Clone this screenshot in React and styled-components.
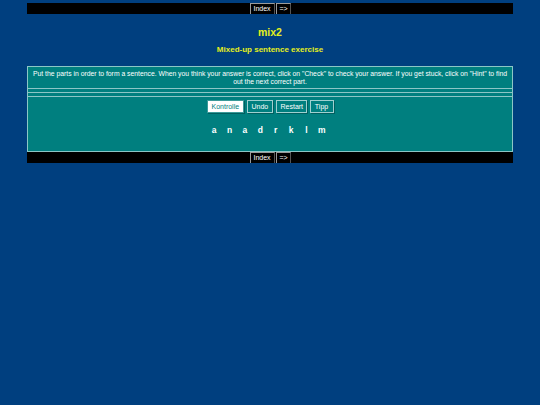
import React from "react";
import styled, { createGlobalStyle } from "styled-components";

const GlobalStyle = createGlobalStyle`
	html, body {
		margin: 0;
		padding: 0;
		background-color: #003f7f;
		font-family: "Liberation Sans", Arial, sans-serif;
	}
	body {
		min-height: 405px;
	}
`;

const Page = styled.div`
	width: 90%;
	margin: 0 auto;
	padding-top: 3px;
`;

const NavBar = styled.div`
	display: flex;
	justify-content: center;
	background-color: #000000;
	height: 11px;
	gap: 1px;
`;

const NavButton = styled.button`
	background-color: #000000;
	color: #ffffff;
	font-family: "Liberation Sans", Arial, sans-serif;
	font-size: 7px;
	border: none;
	border-top: 1px solid #9a9a9a;
	border-left: 1px solid #9a9a9a;
	border-right: 1px solid #555555;
	padding: 0 3px;
	width: ${props => props.width}px;
	height: 11px;
	line-height: 10px;
	text-align: ${props => (props.wide ? "center" : "left")};
	cursor: pointer;
`;

const Title = styled.h2`
	margin: 12px 0 0;
	text-align: center;
	color: #e4ef1c;
	font-size: 10.5px;
	font-weight: bold;
	line-height: 12px;
`;

const SubTitle = styled.h3`
	margin: 7px 0 0;
	text-align: center;
	color: #e4ef1c;
	font-size: 8px;
	font-weight: bold;
	line-height: 10px;
`;

const Box = styled.div`
	background-color: #007f7f;
	border: 1px solid #8cc6c6;
	border-top-width: ${props => (props.joined ? 0 : 1)}px;
	color: #ffffff;
`;

const Instructions = styled(Box)`
	margin-top: 11px;
	padding: 3px 3px 2px;
	font-size: 6.8px;
	line-height: 8px;
	text-align: center;
`;

const Feedback = styled(Box)`
	padding: 3px 0;
	border-bottom: none;
`;

const Rule = styled.div`
	height: 1px;
	background-color: #8cc6c6;
`;

const Exercise = styled(Box)`
	padding: 3px 0 0;
	height: 51px;
	display: flex;
	flex-direction: column;
	align-items: center;
`;

const ButtonRow = styled.div`
	display: flex;
	gap: 3px;
`;

const Button = styled.button`
	font-family: "Liberation Sans", Arial, sans-serif;
	font-size: 7px;
	height: 13px;
	padding: 0 4px;
	width: ${props => props.width}px;
	background-color: ${props => (props.active ? "#ffffff" : "#007f7f")};
	color: ${props => (props.active ? "#007f7f" : "#ffffff")};
	border: 1px solid ${props => (props.active ? "#3a9a9a" : "#9fd0d0")};
	box-shadow: 1px 1px 0 #005f5f;
	cursor: pointer;
`;

const Segments = styled.div`
	display: flex;
	justify-content: center;
	margin-top: 12px;
	margin-left: -4px;
`;

const Segment = styled.span`
	display: inline-block;
	width: 15.4px;
	text-align: center;
	color: #ffffff;
	font-size: 8.5px;
	font-weight: bold;
`;

const Nav = () => (
	<NavBar>
		<NavButton wide width={25}>Index</NavButton>
		<NavButton width={15}>=&gt;</NavButton>
	</NavBar>
);

const letters = ["a", "n", "a", "d", "r", "k", "l", "m"];

const App = () => {
	return (
		<Page>
			<GlobalStyle />
			<Nav />
			<Title>mix2</Title>
			<SubTitle>Mixed-up sentence exercise</SubTitle>
			<Instructions>
				Put the parts in order to form a sentence. When you think your answer is
				correct, click on "Check" to check your answer. If you get stuck, click
				on "Hint" to find out the next correct part.
			</Instructions>
			<Feedback joined>
				<Rule />
			</Feedback>
			<Exercise>
				<ButtonRow>
					<Button active width={37}>Kontrolle</Button>
					<Button width={26}>Undo</Button>
					<Button width={31}>Restart</Button>
					<Button width={24}>Tipp</Button>
				</ButtonRow>
				<Segments>
					{letters.map((l, i) => (
						<Segment key={i}>{l}</Segment>
					))}
				</Segments>
			</Exercise>
			<Nav />
		</Page>
	);
};

export default App;
